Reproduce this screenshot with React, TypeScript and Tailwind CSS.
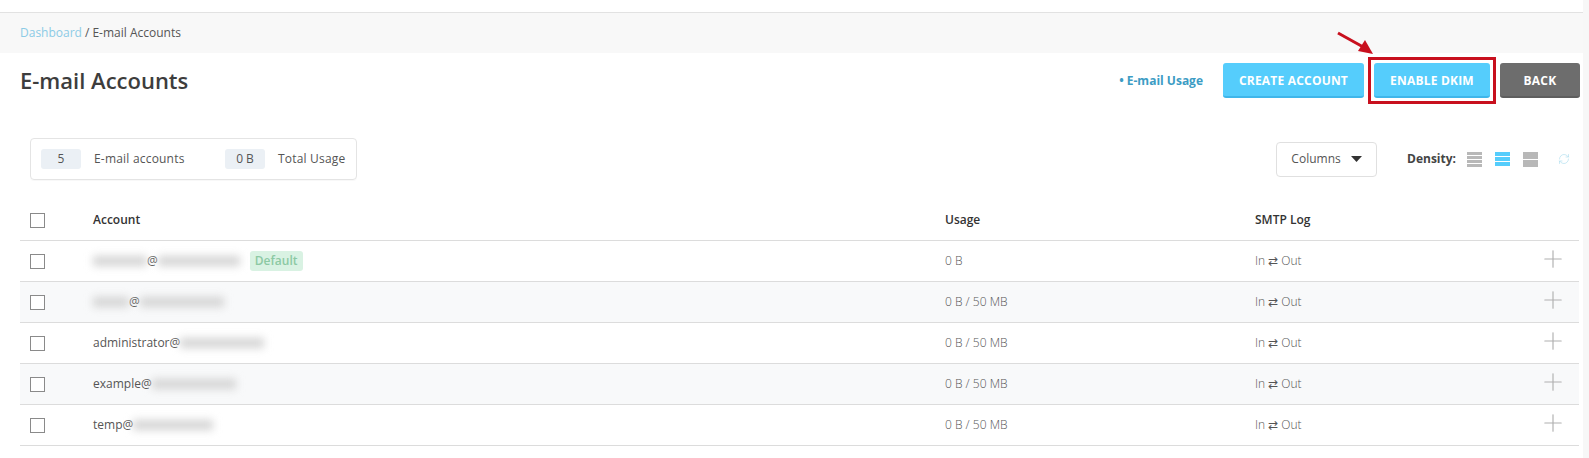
import { Plus, RefreshCw } from "lucide-react";

const rows = [
  { name: "", nameBlur: 54, domainBlur: 82, usage: "0 B", isDefault: true },
  { name: "", nameBlur: 36, domainBlur: 84, usage: "0 B / 50 MB", isDefault: false },
  { name: "administrator", nameBlur: 0, domainBlur: 84, usage: "0 B / 50 MB", isDefault: false },
  { name: "example", nameBlur: 0, domainBlur: 84, usage: "0 B / 50 MB", isDefault: false },
  { name: "temp", nameBlur: 0, domainBlur: 80, usage: "0 B / 50 MB", isDefault: false },
];

const Checkbox = () => <span className="block w-[15px] h-[15px] border border-[#8a8a8a] bg-white" />;

const Blur = ({ width }: { width: number }) => (
  <span className="inline-block h-[10px] bg-[#d4d4d4] blur-[4px]" style={{ width }} />
);

const ActionButton = ({ label, width, dark }: { label: string; width: number; dark?: boolean }) => (
  <button
    className={`h-[35px] pt-[3px] rounded-[3px] border-b-[2px] text-white text-[12px] font-bold tracking-[0.2px] uppercase ${
      dark ? "bg-[#6d6d6d] border-[#5e5e5e]" : "bg-[#55cdfc] border-[#3fb6ea]"
    }`}
    style={{ width }}
  >
    {label}
  </button>
);

const DensityIcon = ({ bars, color }: { bars: number; color: string }) => (
  <div className="w-[15px] h-[15px] flex flex-col gap-px">
    {Array.from({ length: bars }).map((_, i) => (
      <span key={i} className="flex-1" style={{ backgroundColor: color }} />
    ))}
  </div>
);

export default function App() {
  return (
    <div className="flex w-full h-[458px] overflow-hidden bg-white text-[12px] text-[#555] relative font-['Open_Sans',sans-serif]">
      <div className="flex-1 min-w-0">
        <div className="h-[12px]" />
        <div className="h-[41px] border-t border-[#e2e2e2] bg-[#f8f8f8] pl-[20px] flex items-center">
          <a className="text-[#8ccbe6]">Dashboard</a>
          <span className="ml-[3px]">/ E-mail Accounts</span>
        </div>

        <div className="flex items-center justify-between pl-[20px] pr-[3px] mt-[10px]">
          <h1 className="text-[22px] font-semibold text-[#3d3d3d] leading-[35px]">E-mail Accounts</h1>
          <div className="flex items-center">
            <a className="text-[#3c9cc4] font-bold mr-[20px]">• E-mail Usage</a>
            <ActionButton label="Create Account" width={141} />
            <div className="ml-[4px] p-[3px] border-[3px] border-[#c8101e] -my-[6px] box-content w-[116px]">
              <ActionButton label="Enable DKIM" width={116} />
            </div>
            <div className="ml-[4px]">
              <ActionButton label="Back" width={80} dark />
            </div>
          </div>
        </div>

        <div className="flex items-center justify-between pl-[30px] pr-[13px] mt-[40px]">
          <div className="h-[42px] w-[327px] border border-[#e4e4e4] rounded-[4px] flex items-center pl-[10px] shadow-[0_1px_1px_rgba(0,0,0,0.03)]">
            <span className="w-[40px] h-[20px] rounded-[3px] bg-[#ebf0f5] flex items-center justify-center">5</span>
            <span className="ml-[13px] w-[131px] tracking-[0.2px]">E-mail accounts</span>
            <span className="w-[40px] h-[20px] rounded-[3px] bg-[#ebf0f5] flex items-center justify-center">0 B</span>
            <span className="ml-[13px] tracking-[0.2px]">Total Usage</span>
          </div>
          <div className="flex items-center">
            <button className="w-[101px] h-[35px] border border-[#e0e0e0] rounded-[4px] flex items-center justify-center gap-[10px] text-[#555]">
              Columns
              <svg width="11" height="6" viewBox="0 0 11 6">
                <path d="M0 0h11L5.5 6z" fill="#333" />
              </svg>
            </button>
            <span className="ml-[30px] font-bold text-[#444]">Density:</span>
            <div className="ml-[11px] flex items-center gap-[13px]">
              <DensityIcon bars={4} color="#b8b8b8" />
              <DensityIcon bars={3} color="#55cdfc" />
              <DensityIcon bars={2} color="#b8b8b8" />
            </div>
            <RefreshCw size={12} strokeWidth={1.2} className="ml-[20px] text-[#a9dcee]" />
          </div>
        </div>

        <div className="ml-[20px] mr-[4px] mt-[20px]">
          <div className="flex items-center h-[41px] border-b border-[#dcdcdc] font-semibold text-[#333]">
            <div className="w-[73px] pl-[10px]">
              <Checkbox />
            </div>
            <div className="w-[852px]">Account</div>
            <div className="w-[310px]">Usage</div>
            <div>SMTP Log</div>
          </div>
          {rows.map((row, i) => (
            <div
              key={i}
              className={`flex items-center h-[41px] border-b border-[#dcdcdc] ${i % 2 === 1 ? "bg-[#f8f9fa]" : "bg-white"}`}
            >
              <div className="w-[73px] pl-[10px]">
                <Checkbox />
              </div>
              <div className="w-[852px] flex items-center">
                {row.nameBlur > 0 && <Blur width={row.nameBlur} />}
                {row.name}
                <span>@</span>
                <Blur width={row.domainBlur} />
                {row.isDefault && (
                  <span className="ml-[10px] h-[20px] px-[5px] rounded-[3px] bg-[#d9f2e3] text-[#8cc9a4] font-semibold flex items-center">
                    Default
                  </span>
                )}
              </div>
              <div className="w-[310px] text-[#555] font-light">{row.usage}</div>
              <div className="flex-1 text-[#555] font-light">In ⇄ Out</div>
              <Plus size={28} strokeWidth={1} className="mr-[12px] -mt-[4px] text-[#b0b0b0]" />
            </div>
          ))}
        </div>
      </div>
      <div className="w-[6px] bg-[#f7f7f7]" />

      <svg className="absolute left-[1335px] top-[30px]" width="42" height="26" viewBox="0 0 42 26">
        <path d="M3 3 L30 18" stroke="#c8101e" strokeWidth="3" fill="none" />
        <path d="M38 24 L23 21 L30 10 z" fill="#c8101e" />
      </svg>
    </div>
  );
}
